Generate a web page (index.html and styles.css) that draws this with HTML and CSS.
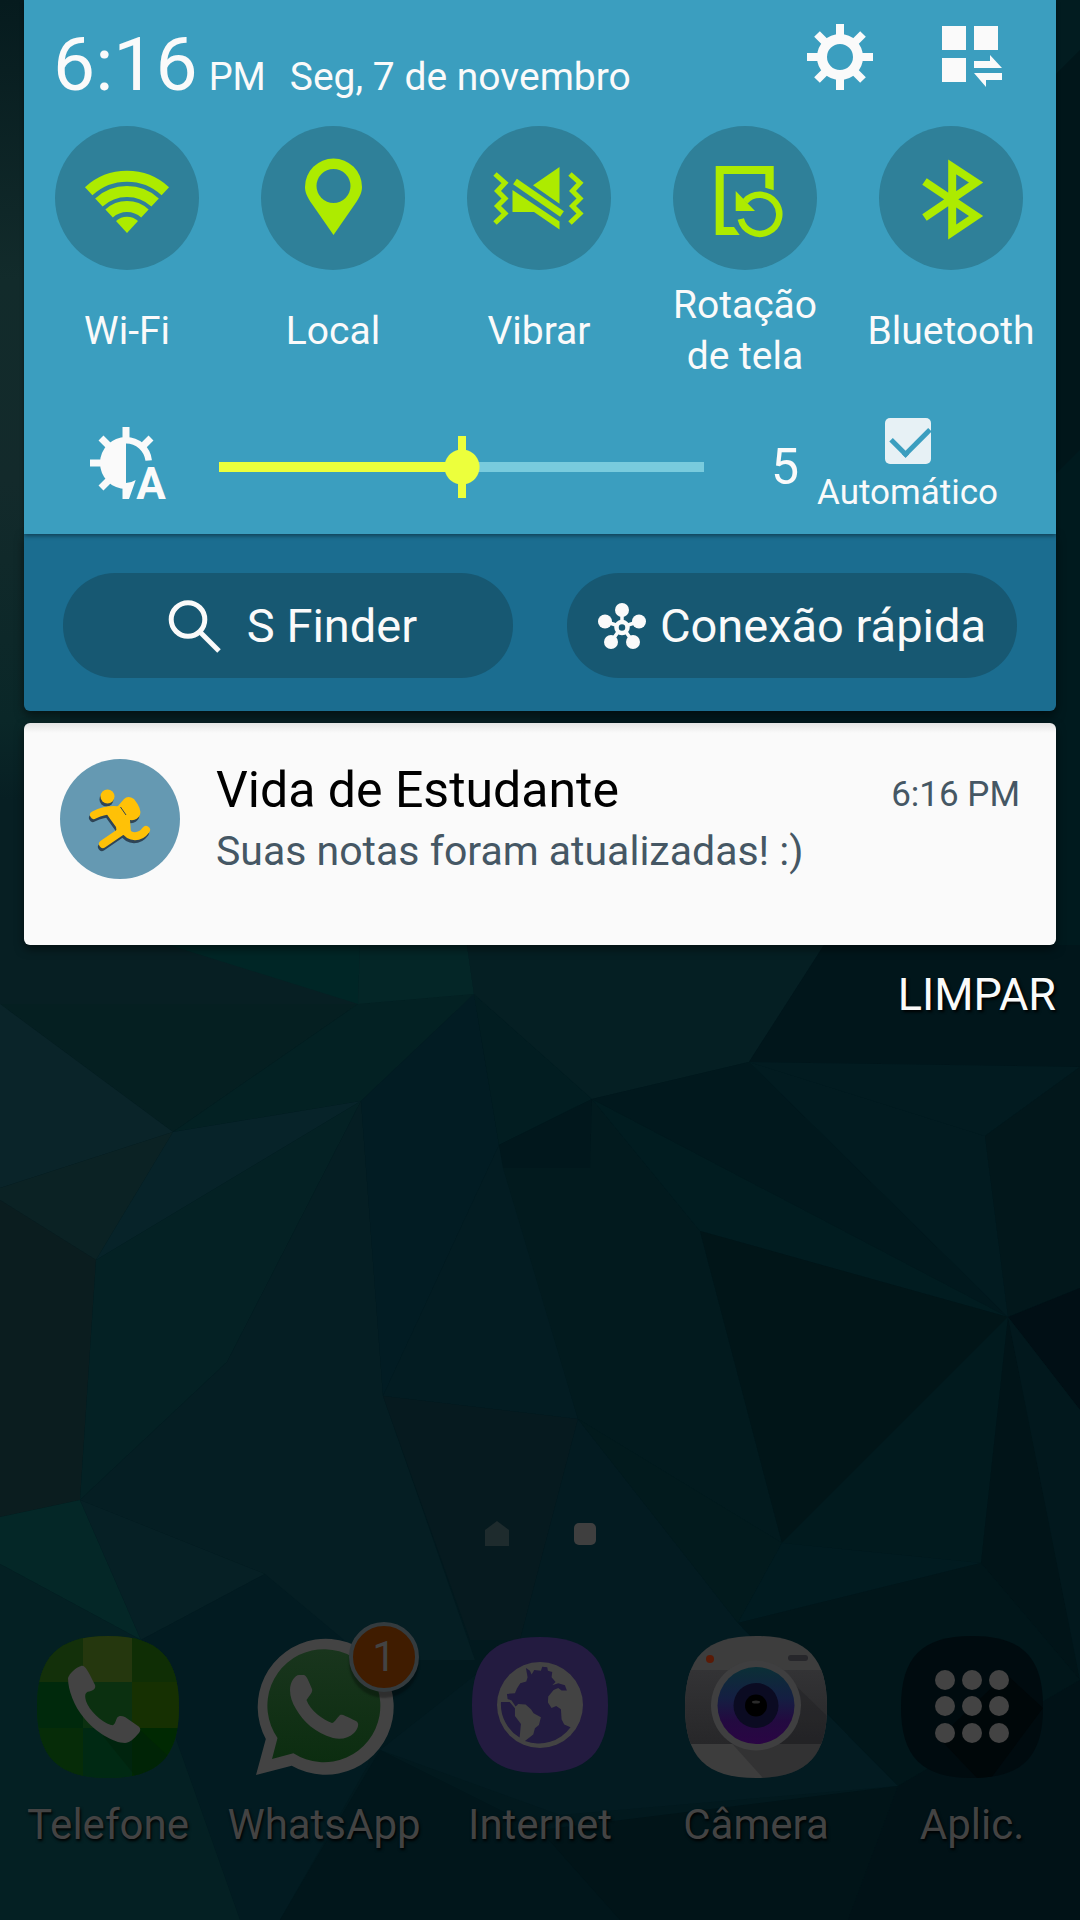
FILE: index.html
```html
<!doctype html>
<html lang="pt-BR">
<head>
	<meta charset="UTF-8" />
	<meta name="viewport" content="width=device-width" />
	<title>Notificações</title>
	<link rel="stylesheet" href="styles.css">
</head>
<body>
	<!-- wallpaper -->
	<svg class="wallpaper" viewBox="0 0 1080 1920" preserveAspectRatio="none" aria-hidden="true">
		<defs>
			<linearGradient id="leftSide" x1="0" y1="0" x2="0" y2="1">
				<stop offset="0" stop-color="#061b1e"/>
				<stop offset=".35" stop-color="#122b2b"/>
				<stop offset=".6" stop-color="#132a2b"/>
				<stop offset=".9" stop-color="#0a2728"/>
				<stop offset="1" stop-color="#071f23"/>
			</linearGradient>
		</defs>
		<rect width="1080" height="1920" fill="#02191e"/>
		<rect width="540" height="1010" fill="#071f23"/>
		<rect width="60" height="800" fill="url(#leftSide)"/>
		<path fill="#021c20" d="M1040 0H1080V50L1040 90Z"/>
		<path fill="#01161a" d="M1040 90L1080 50V450L1040 490Z"/>
		<path fill="#001a1e" d="M1040 490L1080 450V1067H1040Z"/>
		<path fill="#051f21" d="M0 1004H358L173 1132Z"/>
		<path fill="#0a2429" d="M0 1004L173 1132 0 1188Z"/>
		<path fill="#0b2224" d="M0 1188L173 1132 96 1260 0 1200Z"/>
		<path fill="#032123" d="M358 1004L474 994 361 1101 173 1132Z"/>
		<path fill="#002626" d="M169 945H360L358 1004Z"/>
		<path fill="#042627" d="M360 945H467L474 994 358 1004Z"/>
		<path fill="#072329" d="M173 1132L361 1101 96 1260Z"/>
		<path fill="#0b1d1f" d="M0 1200L96 1260 80 1500 0 1517Z"/>
		<path fill="#042124" d="M361 1101L227 1362 80 1500 96 1260Z"/>
		<path fill="#051e23" d="M361 1101L383 1396 475 1660H300L265 1574 80 1500 227 1362Z"/>
		<path fill="#021c23" d="M474 994L499 1145 383 1396 361 1101Z"/>
		<path fill="#021d21" d="M474 994L592 1099 499 1145Z"/>
		<path fill="#051f23" d="M467 945H824L749 1062 592 1099 474 994Z"/>
		<path fill="#031c22" d="M499 1145L578 1419 383 1396Z"/>
		<path fill="#061a1f" d="M383 1396L578 1419 520 1640H470Z"/>
		<path fill="#01171c" d="M499 1145L592 1099 590 1168H503Z"/>
		<path fill="#021a1e" d="M503 1168H590L592 1099 700 1231 782 1543 578 1419Z"/>
		<path fill="#011c20" d="M592 1099L1008 1317 700 1231Z"/>
		<path fill="#01181d" d="M749 1062L1008 1317 592 1099Z"/>
		<path fill="#01161b" d="M824 945H1080V1067L749 1062Z"/>
		<path fill="#021b20" d="M749 1062L985 1136 1008 1317Z"/>
		<path fill="#021b20" d="M749 1062L1080 1067 985 1136Z"/>
		<path fill="#02171b" d="M985 1136L1080 1067V1288L1008 1317Z"/>
		<path fill="#011518" d="M700 1231L1008 1317 782 1543Z"/>
		<path fill="#010f15" d="M1008 1317L1080 1288V1410Z"/>
		<path fill="#011a1e" d="M1008 1317L981 1563 782 1543Z"/>
		<path fill="#011418" d="M1008 1317L1080 1680 981 1563Z"/>
		<path fill="#02181d" d="M1008 1317L1080 1410V1680Z"/>
		<path fill="#031b21" d="M578 1419L738 1623 898 1786 560 1815 380 1750 520 1640Z"/>
		<path fill="#021a1d" d="M578 1419L782 1543 738 1623Z"/>
		<path fill="#011b20" d="M782 1543L981 1563 738 1623Z"/>
		<path fill="#01161a" d="M738 1623L981 1563 1080 1680 898 1786Z"/>
		<path fill="#042727" d="M80 1500L141 1640 0 1564V1517Z"/>
		<path fill="#062025" d="M80 1500L265 1574 141 1640Z"/>
		<path fill="#021b21" d="M265 1574L368 1660 368 1765 280 1920H240L141 1640Z"/>
		<path fill="#042023" d="M0 1564L141 1640 240 1920H0Z"/>
		<path fill="#01161b" d="M380 1750L560 1840 620 1920H280Z"/>
		<path fill="#011418" d="M898 1786L848 1920H620L540 1830Z"/>
		<path fill="#011217" d="M898 1786L1080 1680V1920H848Z"/>
	</svg>

	<section class="shade">
		<div class="panel">
			<header class="top">
				<p class="clock"><b>6:16</b> <span>PM</span></p>
				<p class="date">Seg, 7 de novembro</p>
				<button type="button" aria-label="Configurações">
					<svg width="68" height="68" viewBox="-34 -34 68 68">
						<circle r="18" fill="none" stroke="currentColor" stroke-width="10"/>
						<path stroke="currentColor" stroke-width="8" d="M0-33V-21M0 33V21M-33 0H-21M33 0H21M-23-23L-15-15M23-23L15-15M-23 23L-15 15M23 23L15 15"/>
					</svg>
				</button>
				<button type="button" aria-label="Editar painel">
					<svg width="60" height="68" viewBox="0 0 60 68" fill="currentColor">
						<path d="M0 3H24V27H0ZM32 3H56V27H32ZM0 35H24V59H0Z"/>
						<path d="M32 38H48V32L60 45H32ZM60 50H32L44 64V57H60Z"/>
					</svg>
				</button>
			</header>

			<div class="tiles">
				<button type="button" class="tile">
					<svg viewBox="0 0 144 144">
						<g fill="none" stroke="currentColor" stroke-width="11">
							<path d="M33.7 65.3A56.6 56.6 0 0 1 110.3 65.3M43.9 76.5A41.5 41.5 0 0 1 100.1 76.5M54.1 87.5A26.5 26.5 0 0 1 89.9 87.5"/>
						</g>
						<path fill="currentColor" d="M72 107L61 95A16.3 16.3 0 0 1 83 95Z"/>
					</svg>
					<span>Wi-Fi</span>
				</button>
				<button type="button" class="tile">
					<svg viewBox="0 0 144 144">
						<path fill="currentColor" fill-rule="evenodd" d="M72.5 109L51 78C46 71 44 66 44 61A28.5 28.5 0 0 1 101 61C101 66 99 71 94 78ZM72.5 43A17 17 0 1 0 72.5 77A17 17 0 1 0 72.5 43Z"/>
					</svg>
					<span>Local</span>
				</button>
				<button type="button" class="tile">
					<svg viewBox="0 0 144 144">
						<g fill="none" stroke="currentColor" stroke-width="5">
							<path id="zig" d="M28 48L38 57 30.5 65 38 72.5 30.5 80 38 87.5 28 97"/>
							<use href="#zig" x="75"/>
							<path stroke-width="6.6" d="M48 55.5L95 88"/>
						</g>
						<path fill="currentColor" d="M45.5 64L92.5 95.5V103.5L67 86H45.5ZM92.5 41V77.7L66 59.3Z"/>
					</svg>
					<span>Vibrar</span>
				</button>
				<button type="button" class="tile">
					<svg viewBox="0 0 144 144">
						<path fill="currentColor" d="M42.7 40H100.7V64.3L92.3 61.7V48H50.7V101H61L66.7 109H42.7ZM62.7 65L82 85H62.7Z"/>
						<path fill="none" stroke="currentColor" stroke-width="6.5" d="M67.8 93A19.5 19.5 0 1 0 72.2 75.3"/>
					</svg>
					<span>Rotação<br>de tela</span>
				</button>
				<button type="button" class="tile">
					<svg viewBox="0 0 144 144">
						<path fill="none" stroke="currentColor" stroke-width="8" d="M45.5 55.5L97 90 73.2 106V41L97 56.5 45.5 91.5"/>
					</svg>
					<span>Bluetooth</span>
				</button>
			</div>

			<div class="brightness">
				<svg width="76" height="82" viewBox="0 0 76 82" fill="currentColor" aria-hidden="true">
					<path d="M36 11A26 26 0 0 0 36 63Z"/>
					<path d="M32.5 60V73H39L45.7 54Q41 57 36 57Z"/>
					<path fill="none" stroke="currentColor" stroke-width="6.5" d="M36 14.2A22.8 22.8 0 0 1 58.7 34.5"/>
					<path stroke="currentColor" stroke-width="7" d="M36 1V14M0 37H12M11 12L20 21M61 12L52 21M11 62L20 53"/>
					<text class="auto-letter" x="61" y="73" text-anchor="middle">A</text>
				</svg>
				<input type="range" min="0" max="10" value="5" aria-label="Brilho" style="--fill: 50%">
				<output>5</output>
				<label>
					<input type="checkbox" checked>
					<span>Automático</span>
				</label>
			</div>
		</div>

		<div class="shortcuts">
			<button type="button">
				<svg width="62" height="52" viewBox="-10 0 62 52" fill="none" stroke="currentColor">
					<circle cx="19" cy="19.5" r="16.8" stroke-width="5"/>
					<path stroke-width="5" d="M31 32L50 51"/>
				</svg>
				<span>S Finder</span>
			</button>
			<button type="button" class="quick">
				<svg width="48" height="46" viewBox="0 0 48 46" fill="currentColor">
					<path stroke="currentColor" stroke-width="3.5" d="M24 7V18M7 18.5L18 22M41 18.5L30 22M13 39L20 29M35 39L28 29"/>
					<circle cx="24" cy="7" r="7"/><circle cx="7" cy="18.5" r="7"/><circle cx="41" cy="18.5" r="7"/>
					<circle cx="13" cy="39" r="7"/><circle cx="35" cy="39" r="7"/>
					<circle cx="24" cy="24.5" r="5.5" fill="none" stroke="currentColor" stroke-width="4.5"/>
				</svg>
				<span>Conexão rápida</span>
			</button>
		</div>

		<article class="notification">
			<svg width="120" height="120" viewBox="0 0 120 120" aria-hidden="true">
				<defs>
					<g id="runner" stroke-linecap="round" stroke-linejoin="round">
						<circle cx="47.5" cy="37.5" r="7" stroke="none"/>
						<path stroke="none" d="M44 50L58 47 64 40Q68 36 74 40Q82 50 80 56Q77 62 70 61L71 74 57 75 56 68 48 57Z"/>
						<path fill="none" stroke-width="8" d="M34 56Q44 51 54 51M62 72L43 85M64 70C70 80 80 79 86 71"/>
					</g>
				</defs>
				<circle cx="60" cy="60" r="60" fill="#6599b2"/>
				<use href="#runner" x="-1" y="3" fill="#2e4456" stroke="#2e4456"/>
				<use href="#runner" fill="#ffc107" stroke="#ffc107"/>
				<path fill="none" stroke="#2e4456" stroke-width="1" d="M60.5 48L66 56"/>
			</svg>
			<div class="message">
				<h2>Vida de Estudante</h2>
				<p>Suas notas foram atualizadas! :)</p>
			</div>
			<time>6:16 PM</time>
		</article>

		<button type="button" class="clear">LIMPAR</button>
	</section>

	<main class="home">
		<div class="pages">
			<svg width="24" height="25" viewBox="0 0 24 25" aria-hidden="true"><path fill="#1e2b2d" d="M12 0L24 9V25H0V9Z"/></svg>
			<i></i>
		</div>
		<nav class="dock">
			<a href="#telefone">
				<svg viewBox="0 0 142 142">
					<defs>
						<path id="tile" d="M71 0C121 0 142 21 142 71S121 142 71 142 0 121 0 71 21 0 71 0Z"/>
						<clipPath id="tileClip"><use href="#tile"/></clipPath>
					</defs>
					<g clip-path="url(#tileClip)">
						<rect width="142" height="142" fill="#0b3010"/>
						<path fill="#13300a" d="M0 0H46V46H0Z"/>
						<path fill="#25370e" d="M46 0H95V46H46Z"/>
						<path fill="#0f2e05" d="M95 0H142V46H95Z"/>
						<path fill="#00290c" d="M0 46H46V92H0Z"/>
						<path fill="#163002" d="M95 46H142V92H95Z"/>
						<path fill="#062c08" d="M0 92H46V142H0Z"/>
						<path fill="#002913" d="M46 92H95V142H46Z"/>
						<path fill="#002902" d="M95 92H142V142H95Z"/>
						<path fill="#00200a" opacity=".5" d="M66 100L103 94 142 130V142H100Z"/>
					</g>
					<path fill="#434343" d="M31 42C32 38 39 31 44 30C48 29 50 33 58 49C59 52 57 54 54 55C49 56 47 57 49 65C52 74 64 86 74 89C78 90 78 86 80 82C82 79 85 80 88 81L101 90C104 92 104 95 101 98C97 103 92 107 88 107C77 107 58 96 47 82C37 70 31 54 31 42Z"/>
				</svg>
				<span>Telefone</span>
			</a>
			<a href="#whatsapp">
				<svg viewBox="0 0 142 142">
					<defs>
						<linearGradient id="green" x1="0" y1="0" x2="0" y2="1">
							<stop offset="0" stop-color="#19351d"/>
							<stop offset="1" stop-color="#0c2d10"/>
						</linearGradient>
					</defs>
					<path fill="#434343" d="M3 139L12.8 103A68 68 0 1 1 38.7 129.7Z"/>
					<path fill="url(#green)" d="M19 123L24.5 102A56.5 56.5 0 1 1 40.4 117.3Z"/>
					<path fill="#434343" d="M37 54C37 46 42 39 46 39H50C53 39 54 41 59 53C60 56 57 59 53.5 64C57 74 70 84 79 87C81 87 84 82 87 79C89 78 91 79 103 85C107 87 105 93 101 97C96 102 88 104 80 102C62 97 50 85 43 73C39 67 37 60 37 54Z"/>
				</svg>
				<b class="badge">1</b>
				<span>WhatsApp</span>
			</a>
			<a href="#internet">
				<svg viewBox="0 0 142 142">
					<path fill="#231b40" d="M71 1C118 1 139 22 139 69S118 137 71 137 3 116 3 69 24 1 71 1Z"/>
					<circle cx="71" cy="69" r="43" fill="#434343"/>
					<g fill="#221b40" transform="translate(-4 -6) scale(.333)">
						<path d="M183 114L195 122 200 134 208 120 228 122 232 110 247 112 249 122 262 126 260 142 272 156 262 166 280 160 300 166 306 182 290 182 280 174 266 180 250 200 249 218 260 234 274 228 288 238 290 268 298 284 317 292A117 117 0 0 1 180 333L205 314 210 295 222 285 228 262 206 250 198 238 182 224 160 222 152 230 140 212 128 207 126 192 150 190 156 176 166 160 184 155 188 142Z"/>
						<path d="M108 216H134L150 235V258L168 282 164 323A117 117 0 0 1 108 216Z"/>
					</g>
				</svg>
				<span>Internet</span>
			</a>
			<a href="#camera">
				<svg viewBox="0 0 142 142">
					<defs>
						<linearGradient id="lens" x1="0" y1="0" x2="0" y2="1">
							<stop offset="0" stop-color="#0b2f36"/>
							<stop offset=".4" stop-color="#141f42"/>
							<stop offset=".7" stop-color="#230a40"/>
							<stop offset="1" stop-color="#2a0544"/>
						</linearGradient>
						<linearGradient id="band" x1="0" y1="0" x2="0" y2="1">
							<stop offset="0" stop-color="#333335"/>
							<stop offset="1" stop-color="#272729"/>
						</linearGradient>
					</defs>
					<g clip-path="url(#tileClip)">
						<rect width="142" height="142" fill="#3d3d3d"/>
						<rect y="34" width="142" height="74" fill="url(#band)"/>
						<path fill="#1c1c1e" opacity=".3" d="M106 45L142 80V108H142L140 142H78L42 102Z"/>
					</g>
					<circle cx="25" cy="23" r="4" fill="#5a1a06"/>
					<rect x="103" y="19" width="20" height="6" rx="3" fill="#27272b"/>
					<circle cx="71" cy="69.5" r="45" fill="#3f3f40"/>
					<circle cx="71" cy="69.5" r="38.5" fill="url(#lens)"/>
					<circle cx="71" cy="69.5" r="22.5" fill="#0b0b22"/>
					<circle cx="71" cy="69.5" r="11" fill="#000"/>
					<ellipse cx="71" cy="66" rx="4" ry="1.5" fill="#2a2a2a"/>
				</svg>
				<span>Câmera</span>
			</a>
			<a href="#aplicativos">
				<svg viewBox="0 0 142 142">
					<use href="#tile" fill="#000b0f"/>
					<path fill="#000709" clip-path="url(#tileClip)" d="M105 38L142 72 90 142H76L38 102Z"/>
					<g fill="#434343">
						<circle cx="44" cy="44" r="10"/><circle cx="71" cy="44" r="10"/><circle cx="98" cy="44" r="10"/>
						<circle cx="44" cy="70" r="10"/><circle cx="71" cy="70" r="10"/><circle cx="98" cy="70" r="10"/>
						<circle cx="44" cy="97" r="10"/><circle cx="71" cy="97" r="10"/><circle cx="98" cy="97" r="10"/>
					</g>
				</svg>
				<span>Aplic.</span>
			</a>
		</nav>
	</main>
</body>
</html>
```
FILE: styles.css
```css
*{
	box-sizing: border-box;
	margin: 0;
	padding: 0;
}
body{
	position: relative;
	display: flex;
	flex-direction: column;
	min-height: 100vh;
	background: #02191e;
	color: #fafafa;
	font-family: Roboto, "Noto Sans", sans-serif;
}
button{
	border: 0;
	background: none;
	color: inherit;
	font: inherit;
	cursor: pointer;
}
svg{
	display: block;
	flex-shrink: 0;
	overflow: visible;
}
.wallpaper{
	position: absolute;
	top: 0;
	left: 0;
	z-index: -1;
	width: 100%;
	height: 100%;
	overflow: hidden;
}

/* notification shade */
.shade{
	display: flex;
	flex-direction: column;
	padding: 0 24px;
}
.panel{
	position: relative;
	padding: 23px 0 18px;
	background: #3b9ebf;
	box-shadow: 0 2px 4px rgba(0,0,0,.4);
}
.top{
	display: flex;
	align-items: baseline;
	margin-bottom: 21px;
	padding: 0 54px 0 29px;
}
.clock{
	display: flex;
	align-items: baseline;
	gap: 11px;
	font-size: 38px;
	line-height: 40px;
}
.clock b{
	font-size: 75px;
	font-weight: 400;
	line-height: 82px;
}
.date{
	flex: 1;
	margin-left: 24px;
	font-size: 39px;
	line-height: 40px;
}
.top button{
	align-self: flex-start;
	margin-left: 68px;
}
.tiles{
	display: grid;
	grid-template-columns: repeat(5, 1fr);
	padding-right: 2px;
}
.tile{
	display: flex;
	flex-direction: column;
	align-items: center;
	gap: 10px;
	font-size: 39px;
	line-height: 51px;
}
.tile svg{
	width: 144px;
	height: 144px;
	border-radius: 50%;
	background: #2f8099;
	color: #adeb00;
}
.tile span{
	display: flex;
	align-items: center;
	height: 102px;
}
.brightness{
	display: flex;
	align-items: center;
	margin-top: 36px;
	padding: 0 58px 0 66px;
}
.auto-letter{
	font-size: 44px;
	font-weight: 700;
}
.brightness input[type=range]{
	flex: 1;
	min-width: 0;
	height: 62px;
	margin: 0 65px 0 53px;
	appearance: none;
	background: none;
}
.brightness input[type=range]::-webkit-slider-runnable-track{
	height: 10px;
	background: linear-gradient(to right, #ecff3c var(--fill), #79cbdd var(--fill));
}
.brightness input[type=range]::-webkit-slider-thumb{
	appearance: none;
	width: 36px;
	height: 62px;
	margin-top: -26px;
	background:
		linear-gradient(#ecff3c, #ecff3c) center / 8px 62px no-repeat,
		radial-gradient(circle, #ecff3c 17px, transparent 18px);
}
.brightness output{
	width: 32px;
	margin-right: 16px;
	font-size: 50px;
	line-height: 46px;
	text-align: center;
}
.brightness label{
	display: flex;
	flex-direction: column;
	align-items: center;
	gap: 6px;
	font-size: 35px;
	line-height: 46px;
}
.brightness input[type=checkbox]{
	position: relative;
	width: 46px;
	height: 46px;
	appearance: none;
	border-radius: 5px;
	background: #e7f1f5;
}
.brightness input[type=checkbox]:checked::after{
	content: "";
	position: absolute;
	top: 0;
	left: 14px;
	width: 18px;
	height: 32px;
	border: solid #3b9ebf;
	border-width: 0 5px 5px 0;
	transform: rotate(45deg);
}

.shortcuts{
	display: grid;
	grid-template-columns: 1fr 1fr;
	gap: 54px;
	padding: 39px 39px 33px;
	border-radius: 0 0 6px 6px;
	background: #1b6d90;
	box-shadow: 0 4px 10px rgba(0,0,0,.5);
}
.shortcuts button{
	display: flex;
	align-items: center;
	justify-content: center;
	gap: 26px;
	height: 105px;
	border-radius: 52px;
	background: #175872;
	font-size: 47px;
}
.shortcuts .quick{
	gap: 14px;
}

.notification{
	display: flex;
	align-items: flex-start;
	min-height: 222px;
	margin-top: 12px;
	padding: 36px 36px 36px 36px;
	border-radius: 6px;
	background: linear-gradient(#e4e4e4, #fafafa 10px);
	box-shadow: 0 4px 10px rgba(0,0,0,.5);
	color: #455764;
}
.message{
	flex: 1;
	margin-left: 36px;
}
.message h2{
	color: #000;
	font-size: 50px;
	font-weight: 400;
	line-height: 62px;
}
.message p{
	font-size: 41px;
	line-height: 60px;
}
.notification time{
	font-size: 35px;
	line-height: 72px;
}
.clear{
	align-self: flex-end;
	margin-top: 20px;
	font-size: 45px;
	line-height: 60px;
	text-shadow: 2px 2px 3px #000;
}

/* home screen, dimmed behind the shade */
.home{
	margin-top: auto;
	color: #434343;
}
.pages{
	display: flex;
	align-items: center;
	justify-content: center;
	gap: 65px;
}
.pages i{
	width: 22px;
	height: 22px;
	border-radius: 5px;
	background: #3f3f3f;
}
.dock{
	display: grid;
	grid-template-columns: repeat(5, 1fr);
	padding: 90px 0 65px;
}
.dock a{
	position: relative;
	display: flex;
	flex-direction: column;
	align-items: center;
	gap: 17px;
	color: inherit;
	font-size: 42px;
	line-height: 60px;
	text-decoration: none;
	text-shadow: 1px 2px 3px #000;
}
.dock svg{
	width: 142px;
	height: 142px;
}
.badge{
	position: absolute;
	top: -14px;
	left: calc(50% + 25px);
	width: 70px;
	height: 70px;
	border: 4px solid #343b3e;
	border-radius: 50%;
	background: #401c00;
	box-shadow: 0 6px 2px rgba(0,0,0,.3);
	font-weight: 400;
	line-height: 62px;
	text-align: center;
	text-shadow: none;
}
```
